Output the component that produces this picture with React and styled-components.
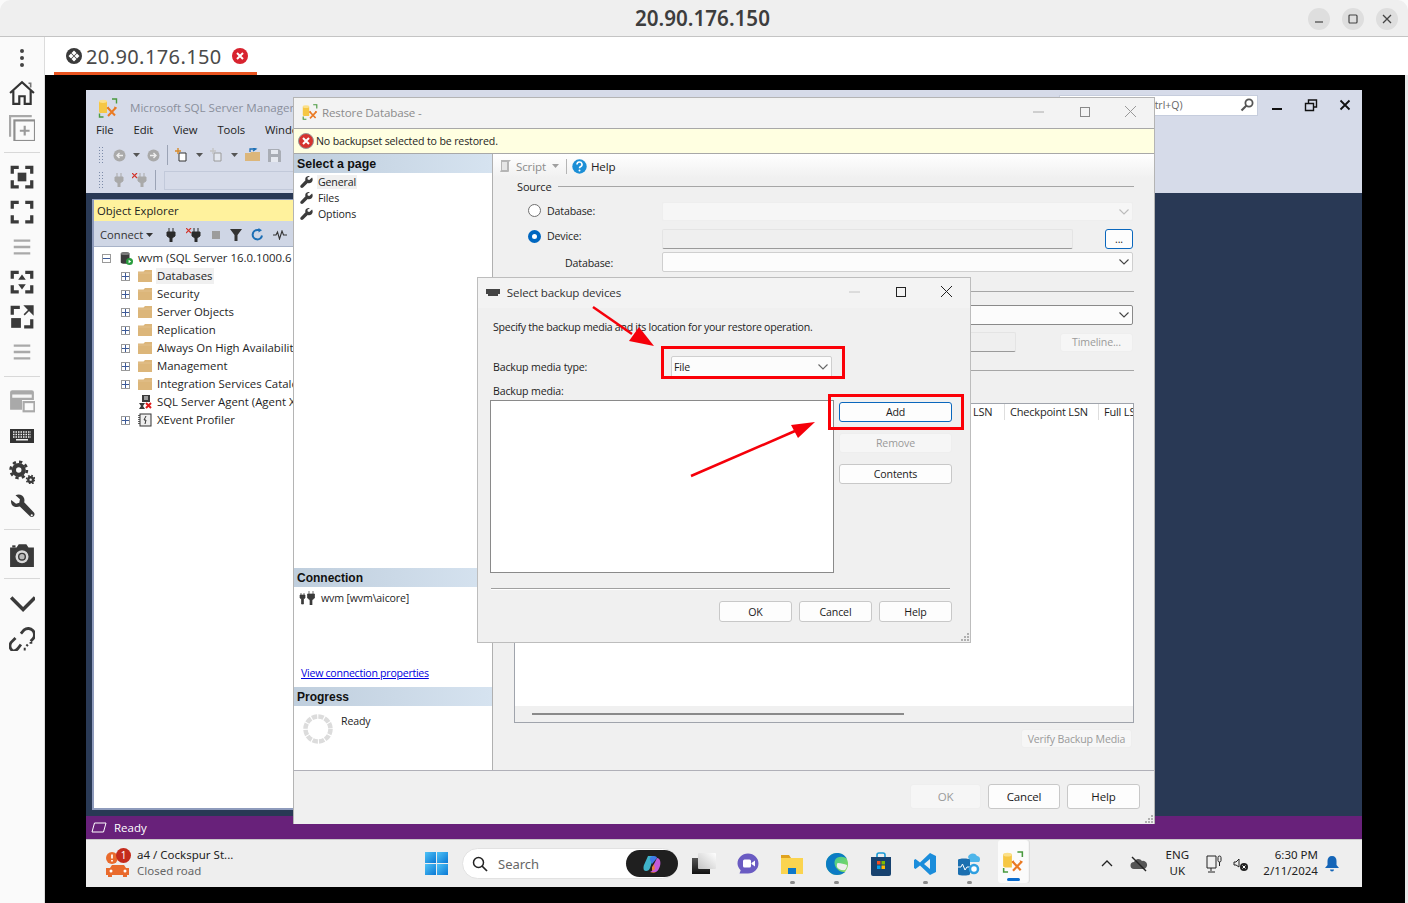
import React from 'react';
import styled, { createGlobalStyle } from 'styled-components';

const GlobalStyle = createGlobalStyle`
	html, body { margin: 0; padding: 0; background: #000; }
	body { font-family: 'Open Sans', 'Liberation Sans', sans-serif; overflow: hidden; }
	* { box-sizing: border-box; }
`;

const REMOTE = `'Open Sans', 'Liberation Sans', sans-serif`;

/* ---------- icons ---------- */

const Svg = ({ size = 24, w, h, box = '0 0 24 24', children }) => (
	<svg width={w || size} height={h || size} viewBox={box} style={{ display: 'block', flex: 'none' }}>
		{children}
	</svg>
);

const Brackets = () => (
	<path d="M3 9V3h6M15 3h6v6M21 15v6h-6M9 21H3v-6" fill="none" stroke="#3a3a3a" strokeWidth="3" />
);

const RailIcons = {
	dots: (
		<Svg>
			<circle cx="12" cy="5" r="2" fill="#444" />
			<circle cx="12" cy="12" r="2" fill="#444" />
			<circle cx="12" cy="19" r="2" fill="#444" />
		</Svg>
	),
	home: (
		<Svg size={26}>
			<path d="M1 12L12 2l11 10M4 10v12h5.500v-7h5v7H20V10" fill="none" stroke="#333" strokeWidth="2" />
			<path d="M18 3h2v4" fill="none" stroke="#777" strokeWidth="1.500" />
		</Svg>
	),
	add: (
		<Svg size={26}>
			<path d="M1 20V1h20" fill="none" stroke="#a8a8a8" strokeWidth="2" />
			<rect x="5" y="5" width="19" height="19" fill="none" stroke="#8e8e8e" strokeWidth="2" />
			<path d="M14.500 10v9M10 14.500h9" stroke="#9a9a9a" strokeWidth="2" />
		</Svg>
	),
	fit: (
		<Svg size={26}>
			<Brackets />
			<rect x="8" y="8" width="8" height="8" fill="#3a3a3a" />
		</Svg>
	),
	corners: (
		<Svg size={26}>
			<Brackets />
		</Svg>
	),
	lines: (
		<Svg size={22}>
			<path d="M3 5h18M3 12h18M3 19h18" stroke="#a9a9a9" strokeWidth="2.500" />
		</Svg>
	),
	updown: (
		<Svg size={26}>
			<Brackets />
			<path d="M12 5l3.500 5h-7zM12 19l-3.500-5h7z" fill="#3a3a3a" />
		</Svg>
	),
	expand: (
		<Svg size={26}>
			<path d="M3 10V3h7M21 14v7h-7" fill="none" stroke="#3a3a3a" strokeWidth="3" />
			<rect x="2" y="13" width="9" height="9" fill="#3a3a3a" />
			<path d="M15 2h7v7zM14 10l4-4" fill="#3a3a3a" stroke="#3a3a3a" strokeWidth="1.500" />
		</Svg>
	),
	window: (
		<Svg size={26} box="0 1 24 24">
			<path d="M1 21V5q0-2 2-2h18q2 0 2 2v7H12v9z" fill="#a9a9a9" />
			<rect x="3" y="7" width="18" height="3" fill="#f5f5f5" />
			<rect x="13.500" y="14" width="10" height="8.500" fill="#fafafa" stroke="#a9a9a9" strokeWidth="2" />
		</Svg>
	),
	keyboard: (
		<Svg w={24} h={14} box="0 0 24 14">
			<rect width="24" height="14" fill="#333" />
			<path d="M3 3h18M3 5.500h18M3 8h18" stroke="#eee" strokeWidth="1.300" strokeDasharray="1.500 1" />
			<rect x="6" y="10" width="12" height="1.500" fill="#eee" />
		</Svg>
	),
	gears: (
		<Svg size={26} box="0 -1 24 24">
			<circle cx="9" cy="10" r="4.500" fill="none" stroke="#3a3a3a" strokeWidth="4" />
			<circle cx="9" cy="10" r="7.500" fill="none" stroke="#3a3a3a" strokeWidth="2.500" strokeDasharray="3 2.900" />
			<circle cx="20" cy="19" r="2.200" fill="none" stroke="#3a3a3a" strokeWidth="2.200" />
			<circle cx="20" cy="19" r="3.800" fill="none" stroke="#3a3a3a" strokeWidth="1.500" strokeDasharray="1.500 1.500" />
		</Svg>
	),
	wrench: (
		<Svg size={26}>
			<path
				d="M2 6.500L6.500 10l3-1 .6-3.200L6 2c3-1.500 7-.5 8 3 .4 1.300.3 2.500 0 3.500l9 9.500c.8 1 .8 2.500-.2 3.500s-2.500 1-3.500 0L10 12.500c-3 1-6 .3-7.500-2-.6-1-.8-2.500-.5-4z"
				fill="#3a3a3a"
			/>
			<circle cx="21" cy="20.500" r="1" fill="#fafafa" />
		</Svg>
	),
	camera: (
		<Svg size={26}>
			<path d="M1 6h6l2-3h7l2 3h5v18H1z" fill="#3a3a3a" />
			<rect x="3" y="4" width="3" height="2" fill="#3a3a3a" />
			<circle cx="12" cy="14.500" r="6" fill="#d9d9d9" />
			<circle cx="12" cy="14.500" r="3.700" fill="#3a3a3a" />
			<circle cx="12" cy="14.500" r="2.400" fill="#bcbcbc" />
		</Svg>
	),
	chevron: (
		<Svg size={26}>
			<path d="M2 7l11 11L24 7" fill="none" stroke="#3a3a3a" strokeWidth="3.200" />
		</Svg>
	),
	link: (
		<Svg size={26} box="0 -2 24 24">
			<path d="M11 6l3-3.500c2.500-2 6-1.500 8 .5s2 6 0 8l-2 2M11 16l-3 4c-2 2-4 2.500-5.500 1S0 17 2 14l4-4" fill="none" stroke="#3a3a3a" strokeWidth="2.600" />
			<path d="M16 16l1.500 1.500M19 14.500h2.500M14.500 19v2.500" stroke="#3a3a3a" strokeWidth="1.800" />
		</Svg>
	),
};

const SsmsLogo = ({ size = 20 }) => (
	<Svg size={size} box="0 0 20 20">
		<path d="M1 3.500C1 2 9 2 9 3.500V15H3c-1 0-2-.5-2-1.500z" fill="#f6c744" />
		<ellipse cx="5" cy="3.300" rx="4" ry="1.600" fill="#fbe08a" />
		<path d="M1.500 15.500v3.500h4M14 1h4.500v4.500" fill="none" stroke="#4a9a3f" strokeWidth="1.400" />
		<path d="M9.500 9.500l7.500 8M18 9.500l-8 8.500" stroke="#ea7a23" strokeWidth="2" />
		<path d="M16 8.500l3 1-2 2zM8.500 10l2-1.500 1 2.500z" fill="#ea7a23" />
	</Svg>
);

const Wrench12 = () => (
	<Svg size={13} box="0 0 14 14">
		<path d="M13 1.500L10 4.200 8.300 3.700 8 2l2.600-1.700C8.500-.5 6 .7 5.700 3c-.1.700 0 1.200.2 1.700L.8 10c-.7.800-.7 1.800 0 2.500s1.800.7 2.500 0l5-5c2.500.8 4.800-.5 5.300-3 .1-1 0-2-.6-3z" fill="#3b3b3b" />
	</Svg>
);

const Folder = () => (
	<Svg size={14} box="0 0 14 14">
		<path d="M0 2.500h5.500L7 1h7v12H0z" fill="#dcb67a" />
		<path d="M0 4h14" stroke="#e8cb9a" strokeWidth="0.600" />
	</Svg>
);

const Expander = ({ minus }) => (
	<ExpanderBox>
		<svg width="7" height="7" viewBox="0 0 7 7">
			<path d={minus ? 'M0 3.500h7' : 'M0 3.500h7M3.500 0v7'} stroke="#3d5a98" strokeWidth="1" />
		</svg>
	</ExpanderBox>
);

const Plug = ({ color = '#2b2b2b', crossed }) => (
	<Svg w={crossed ? 16 : 12} h={14} box={crossed ? '-4 0 16 14' : '0 0 12 14'}>
		<path d="M4 0v4M8 0v4M2 4h8v4L7 10v4H5v-4L2 8z" fill={color} stroke={color} strokeWidth="1" />
		{crossed && <path d="M-4 0l5 5M1 0l-5 5" stroke="#d2342a" strokeWidth="1.200" />}
	</Svg>
);

const SmallCaret = () => (
	<svg width="7" height="4" viewBox="0 0 7 4">
		<path d="M0 0h7L3.500 4z" fill="currentColor" />
	</svg>
);

const ComboChevron = ({ color = '#444' }) => (
	<svg width="10" height="6" viewBox="0 0 10 6">
		<path d="M.5.500L5 5 9.500.500" fill="none" stroke={color} strokeWidth="1.100" />
	</svg>
);

const Grip = () => (
	<svg width="9" height="9" viewBox="0 0 9 9">
		<path d="M7 1h2v2H7zM4 4h2v2H4zM7 4h2v2H7zM1 7h2v2H1zM4 7h2v2H4zM7 7h2v2H7z" fill="#b0b0b0" />
	</svg>
);

const Spinner = () => (
	<Svg size={30} box="0 0 30 30">
		<circle cx="15" cy="15" r="12.500" fill="none" stroke="#dcdcdc" strokeWidth="4.500" strokeDasharray="5.400 1.140" />
	</Svg>
);

/* ---------- viewer chrome ---------- */

const Shell = styled.div`
	width: 1408px;
	height: 903px;
	display: flex;
	flex-direction: column;
	background: #fafafa;
	overflow: hidden;
`;

const TitleBar = styled.header`
	height: 37px;
	flex: none;
	display: flex;
	align-items: center;
	justify-content: center;
	position: relative;
	background: #efefef;
	border-bottom: 1px solid #c4c4c4;
	border-radius: 11px 11px 0 0;
`;

const TitleText = styled.div`
	font-family: 'Noto Sans', sans-serif;
	font-size: 20.6px;
	font-weight: 600;
	color: #3d3d3d;
	margin-left: -3px;
`;

const TitleControls = styled.div`
	position: absolute;
	right: 10px;
	top: 8px;
	display: flex;
	gap: 12px;
`;

const TitleControl = styled.div`
	width: 22px;
	height: 22px;
	border-radius: 50%;
	background: #dedede;
	display: flex;
	align-items: center;
	justify-content: center;
`;

const Main = styled.div`
	flex: 1;
	display: flex;
	min-height: 0;
`;

const Rail = styled.nav`
	width: 45px;
	flex: none;
	display: flex;
	flex-direction: column;
	padding-top: 3px;
	background: #fafafa;
	border-right: 1px solid #dcdcdc;
`;

const RailButton = styled.div`
	height: 35px;
	display: flex;
	align-items: center;
	justify-content: center;
	padding-right: 1px;
`;

const RailRule = styled.div`
	height: ${(p) => p.$h}px;
	display: flex;
	align-items: center;
	justify-content: center;
	&::after {
		content: '';
		width: 36px;
		height: 1px;
		background: #d8d8d8;
	}
`;

const Viewer = styled.div`
	flex: 1;
	display: flex;
	flex-direction: column;
	min-width: 0;
`;

const TabStrip = styled.div`
	height: 38px;
	flex: none;
	padding-left: 9px;
	background: #fff;
	display: flex;
`;

const Tab = styled.div`
	width: 203px;
	display: flex;
	align-items: center;
	gap: 4px;
	padding: 3px 0 0 12px;
	border-bottom: 3px solid #e95420;
	font-family: 'Noto Sans', sans-serif;
	font-size: 20px;
	color: #4a4a4a;
	letter-spacing: 0.4px;
`;

const RemoteArea = styled.div`
	flex: 1;
	background: #000;
	padding: 15px 43px 16px 41px;
	position: relative;
	display: flex;
	&::after {
		content: '';
		position: absolute;
		right: 0;
		top: 0;
		bottom: 0;
		width: 3px;
		background: #e8e8e8;
	}
`;

/* ---------- remote desktop ---------- */

const Desktop = styled.div`
	position: relative;
	width: 1276px;
	height: 797px;
	display: flex;
	flex-direction: column;
	font-family: ${REMOTE};
	font-size: 10.6px;
	color: #1e1e1e;
	overflow: hidden;
`;

const SsmsChrome = styled.div`
	height: 103px;
	flex: none;
	background: #d6dbe9;
	display: flex;
	flex-direction: column;
`;

const SsmsTitle = styled.div`
	height: 29px;
	flex: none;
	display: flex;
	align-items: center;
	padding: 6px 0 0 12px;
	gap: 12px;
	color: #8a8f9c;
	font-size: 11.6px;
`;

const SsmsName = styled.div`
	width: 163px;
	flex: none;
	white-space: nowrap;
	overflow: hidden;
`;

const QuickLaunch = styled.div`
	margin-left: auto;
	width: 199px;
	height: 21px;
	margin-top: -5px;
	background: #fff;
	border: 1px solid #c6cddd;
	display: flex;
	align-items: center;
	justify-content: space-between;
	padding: 0 3px 0 16px;
	font-size: 10.5px;
	color: #666;
`;

const WindowButtons = styled.div`
	display: flex;
	width: 104px;
	padding-left: 12px;
	margin-left: -12px;
	gap: 20px;
	margin-top: -6px;
`;

const MenuBar = styled.div`
	width: 207px;
	height: 24px;
	flex: none;
	display: flex;
	align-items: center;
	padding: 0 0 3px 10px;
	gap: 20px;
	font-size: 11.3px;
	letter-spacing: -0.1px;
	color: #222;
	overflow: hidden;
`;

const ToolRow = styled.div`
	height: 24px;
	flex: none;
	margin: 0 0 1px 10px;
	display: flex;
	align-items: center;
	gap: 7px;
	padding-left: 13px;
	color: #555;
`;

const ToolGrip = styled.div`
	width: 5px;
	height: 18px;
	margin: 0 3px 0 -11px;
	background-image: radial-gradient(#7c8ba8 0.7px, transparent 0.8px);
	background-size: 3px 3px;
`;

const ToolBreak = styled.div`
	width: 1px;
	height: 20px;
	background: #9ba3b5;
`;

const ToolInput = styled.div`
	width: 300px;
	height: 19px;
	margin-left: 1px;
	border: 1px solid #c2c9da;
`;

const SsmsBody = styled.div`
	flex: 1;
	min-height: 0;
	background: #293955;
	padding: 6px 0 6px 6px;
`;

const ObjectExplorer = styled.section`
	width: 201px;
	height: 100%;
	display: flex;
	flex-direction: column;
	background: #fff;
	border: 1px solid #8e9bbc;
	border-width: 1px 0 2px 2px;
	overflow: hidden;
`;

const ExplorerHead = styled.div`
	height: 21px;
	flex: none;
	background: #fff29d;
	display: flex;
	align-items: center;
	padding-left: 3px;
	font-size: 11.3px;
	color: #222;
`;

const ExplorerTools = styled.div`
	height: 26px;
	flex: none;
	background: #cfd6e5;
	display: flex;
	align-items: center;
	padding: 2px 0 0 6px;
	gap: 9px;
	color: #333;
	font-size: 11.2px;
	border-bottom: 1px solid #a8b3c8;
`;

const ConnectLabel = styled.span`
	display: flex;
	align-items: center;
	gap: 3px;
	margin-right: 3px;
`;

const Tree = styled.div`
	flex: 1;
	padding-top: 2px;
	display: flex;
	flex-direction: column;
`;

const TreeRow = styled.div`
	height: 18px;
	flex: none;
	display: flex;
	align-items: center;
	padding-left: ${(p) => p.$indent}px;
	gap: 4px;
	white-space: nowrap;
	font-size: 11.4px;
`;

const TreeLabel = styled.span`
	padding: 0 1px;
	background: ${(p) => (p.$selected ? '#f0f0f0' : 'transparent')};
	line-height: 16px;
`;

const ExpanderBox = styled.div`
	width: 9px;
	height: 9px;
	flex: none;
	margin-right: 4px;
	border: 1px solid #9a9a9a;
	background: #fff;
	display: flex;
	align-items: center;
	justify-content: center;
	& svg { display: block; }
`;

const ExpanderSlot = styled.div`
	width: 13px;
	flex: none;
`;

const StatusBar = styled.footer`
	height: 24px;
	flex: none;
	background: #68217a;
	color: #fff;
	display: flex;
	align-items: center;
	padding-left: 5px;
	gap: 7px;
	font-size: 11.5px;
	border-bottom: 1px solid #c9c9c9;
`;

/* ---------- taskbar ---------- */

const Taskbar = styled.div`
	height: 47px;
	flex: none;
	background: #eeeeee;
	display: flex;
	align-items: center;
	font-family: 'Noto Sans', sans-serif;
`;

const Weather = styled.div`
	width: 339px;
	flex: none;
	padding-left: 19px;
	display: flex;
	align-items: center;
	gap: 6px;
	position: relative;
`;

const Badge = styled.div`
	position: absolute;
	left: 30px;
	top: -1px;
	width: 15px;
	height: 15px;
	border-radius: 50%;
	background: #c42b1c;
	color: #fff;
	font-size: 10px;
	display: flex;
	align-items: center;
	justify-content: center;
`;

const TwoLine = styled.div`
	display: flex;
	flex-direction: column;
	font-size: 11.5px;
	line-height: 16px;
	margin-top: -2px;
	margin-left: ${(p) => p.$left || 0}px;
	color: #222;
	text-align: ${(p) => p.$align || 'left'};
`;

const MutedLine = styled.span`
	color: #666;
`;

const WinGrid = styled.div`
	width: 23px;
	height: 23px;
	flex: none;
	display: grid;
	grid-template-columns: 1fr 1fr;
	gap: 1px;
	margin-right: 14px;
	& > div {
		background: linear-gradient(135deg, #4fc3f7, #0a78d4);
	}
`;

const SearchBox = styled.div`
	width: 216px;
	height: 31px;
	flex: none;
	border-radius: 16px;
	background: #fff;
	border: 1px solid #e2e2e2;
	display: flex;
	align-items: center;
	padding-left: 9px;
	gap: 10px;
	font-size: 13px;
	color: #666;
`;

const CopilotPill = styled.div`
	margin-left: auto;
	width: 52px;
	height: 27px;
	margin-right: -1px;
	border-radius: 14px;
	background: #1f1f1f;
	display: flex;
	align-items: center;
	justify-content: center;
`;

const TaskIcons = styled.div`
	display: flex;
	margin-left: 4px;
`;

const TaskIcon = styled.div`
	width: 44.2px;
	height: 47px;
	display: flex;
	align-items: center;
	justify-content: center;
	position: relative;
	${(p) => p.$running && `
		&::after {
			content: '';
			position: absolute;
			bottom: 3px;
			width: 5px;
			height: 3px;
			border-radius: 2px;
			background: #8a8a8a;
		}
	`}
`;

const ActiveIcon = styled(TaskIcon)`
	width: 30px;
	height: 43px;
	margin: 0 0 0 7px;
	background: #fbfbfb;
	border-radius: 3px;
	box-shadow: 1px 0 0 #f4f4f4, 2px 0 0 #dddddd;
	&::after {
		content: '';
		position: absolute;
		bottom: 2px;
		left: 9px;
		width: 13px;
		height: 3px;
		border-radius: 2px;
		background: #0a6cce;
	}
`;

const Tray = styled.div`
	margin-left: 61px;
	display: flex;
	align-items: center;
`;

const TrayItem = styled.div`
	width: ${(p) => p.$w}px;
	display: flex;
	align-items: center;
	justify-content: center;
`;

/* ---------- restore window ---------- */

const RestoreWindow = styled.div`
	position: absolute;
	left: 207px;
	top: 7px;
	width: 862px;
	height: 727px;
	display: flex;
	flex-direction: column;
	background: #f0f0f0;
	border: 1px solid #b4b4b4;
	border-width: 1px 1px 0 1px;
	letter-spacing: -0.15px;
`;

const WindowTitle = styled.div`
	height: 30px;
	flex: none;
	display: flex;
	align-items: center;
	padding: 0 0 2px 8px;
	gap: 4px;
	font-size: 11.6px;
	color: ${(p) => p.$color || '#8c8c8c'};
	background: #f3f3f3;
`;

const CaptionButtons = styled.div`
	margin-left: auto;
	display: flex;
	align-items: center;
	gap: ${(p) => p.$gap}px;
	padding-right: ${(p) => p.$pad}px;
`;

const Notice = styled.div`
	height: 26px;
	flex: none;
	display: flex;
	align-items: center;
	gap: 2px;
	padding-left: 4px;
	background: #ffffe1;
	border: solid #a8a8a8;
	border-width: 1px 0;
	font-size: 10.6px;
`;

const RestoreBody = styled.div`
	flex: 1;
	min-height: 0;
	display: flex;
	border-bottom: 1px solid #b0b0b8;
`;

const SidePane = styled.aside`
	width: 199px;
	flex: none;
	display: flex;
	flex-direction: column;
	background: #fff;
	border-right: 1px solid #b0b0b0;
`;

const SideHead = styled.div`
	height: 19px;
	flex: none;
	display: flex;
	align-items: center;
	padding: 1px 0 0 3px;
	font-family: 'Liberation Sans', sans-serif;
	font-weight: 700;
	font-size: ${(p) => p.$size || 12}px;
	letter-spacing: 0;
	color: #111;
	background: linear-gradient(90deg, #bfcedd, #d6e3f0);
`;

const PageItem = styled.div`
	height: 16px;
	flex: none;
	display: flex;
	align-items: center;
	padding-left: 6px;
	gap: 4px;
`;

const PageLabel = styled.span`
	padding: 0 1px;
	background: ${(p) => (p.$selected ? '#f0f0f0' : 'transparent')};
`;

const SideList = styled.div`
	flex: 1;
	padding-top: 1px;
	display: flex;
	flex-direction: column;
`;

const ConnectionRow = styled.div`
	height: 22px;
	flex: none;
	display: flex;
	align-items: center;
	padding-left: 5px;
	gap: 6px;
`;

const ConnectionLink = styled.a`
	margin: 55px 0 5px 7px;
	height: 18px;
	flex: none;
	line-height: 18px;
	display: block;
	color: #0000e0;
	letter-spacing: -0.27px;
	text-decoration: underline;
`;

const ProgressRow = styled.div`
	height: 64px;
	flex: none;
	display: flex;
	padding: 8px 0 0 9px;
	gap: 8px;
	align-items: flex-start;
`;

const FormPane = styled.div`
	flex: 1;
	min-width: 0;
	display: flex;
	flex-direction: column;
`;

const FormTools = styled.div`
	height: 24px;
	flex: none;
	display: flex;
	align-items: center;
	padding-left: 5px;
	gap: 4px;
	background: linear-gradient(#ffffff, #f0f0f0);
	font-size: 11.6px;
	color: #8c8c8c;
`;

const ToolDivider = styled.div`
	width: 1px;
	height: 15px;
	margin: 0 1px 0 3px;
	background: #b5b5b5;
`;

const ScriptCaret = styled.span`
	margin-left: 2px;
	line-height: 0;
	color: #a0a0a0;
`;

const HelpText = styled.span`
	color: #222;
`;

const GroupHead = styled.div`
	height: 18px;
	flex: none;
	margin: ${(p) => p.$top}px 20px 0 24px;
	display: flex;
	align-items: center;
	gap: 7px;
	font-size: 11px;
	&::after {
		content: '';
		flex: 1;
		height: 1px;
		background: #a6a6a6;
	}
`;

const FormRow = styled.div`
	height: ${(p) => p.$h}px;
	flex: none;
	margin: ${(p) => p.$top}px 21px 0 ${(p) => p.$left || 35}px;
	display: grid;
	grid-template-columns: ${(p) => p.$cols || '134px 1fr'};
	align-items: center;
`;

const RadioLabel = styled.label`
	display: flex;
	align-items: center;
	gap: 6px;
	margin-bottom: ${(p) => p.$lift}px;
`;

const FieldLabel = styled.span`
	margin-top: 2px;
`;

const Radio = styled.span`
	width: 13px;
	height: 13px;
	flex: none;
	border-radius: 50%;
	background: #fff;
	border: ${(p) => (p.$on ? '4px solid #0067c0' : '1px solid #707070')};
`;

const Combo = styled.div`
	height: 100%;
	display: flex;
	align-items: center;
	justify-content: space-between;
	padding: 0 3px 0 2px;
	background: ${(p) => (p.$disabled ? '#f6f6f6' : '#fcfcfc')};
	border: 1px solid ${(p) => (p.$strong ? '#8a8a8a' : p.$disabled ? '#eeeeee' : '#cfcfcf')};
	border-radius: 2px;
`;

const Field = styled.div`
	width: ${(p) => p.$w}px;
	height: 100%;
	border: 1px solid #e4e4e4;
	border-bottom-color: #9a9a9a;
	border-radius: 2px;
	background: #efefef;
`;

const Btn = styled.div`
	width: ${(p) => p.$w}px;
	height: ${(p) => p.$h}px;
	flex: none;
	display: flex;
	align-items: center;
	justify-content: center;
	border-radius: 3px;
	font-size: ${(p) => p.$size || 10.6}px;
	color: ${(p) => (p.$disabled ? '#9a9a9a' : '#1a1a1a')};
	background: ${(p) => (p.$disabled ? '#f6f6f6' : '#fdfdfd')};
	border: 1px solid ${(p) => (p.$primary ? '#0a67bd' : p.$disabled ? '#eeeeee' : '#c8c8c8')};
`;

const DeviceRow = styled.div`
	height: 100%;
	display: flex;
	justify-content: space-between;
	align-items: center;
`;

const BackupTable = styled.div`
	height: 320px;
	flex: none;
	margin: 24px 20px 0 21px;
	display: flex;
	flex-direction: column;
	background: #fff;
	border: 1px solid #a0a4ac;
	overflow: hidden;
`;

const TableHead = styled.div`
	height: 18px;
	flex: none;
	display: flex;
	white-space: nowrap;
	font-size: 11px;
	letter-spacing: -0.2px;
`;

const HeadCell = styled.div`
	flex: 0 0 ${(p) => p.$w}px;
	padding-left: ${(p) => p.$pad ?? 5}px;
	border-right: ${(p) => (p.$w < 200 ? '1px solid #dedede' : 'none')};
	height: 16px;
	line-height: 16px;
`;

const TableBody = styled.div`
	flex: 1;
`;

const TableScroll = styled.div`
	height: 16px;
	flex: none;
	background: #f0f0f0;
	padding: 7px 0 0 17px;
	&::before {
		content: '';
		display: block;
		width: 372px;
		height: 2px;
		background: #8a8a8a;
	}
`;

const RightAlign = styled.div`
	display: flex;
	justify-content: flex-end;
	margin: ${(p) => p.$top}px ${(p) => p.$right}px 0 0;
`;

const RestoreFooter = styled.div`
	height: 53px;
	flex: none;
	position: relative;
	padding: 13px 14px 0 0;
	display: flex;
	justify-content: flex-end;
	gap: 7px;
`;

const GripSlot = styled.div`
	position: absolute;
	right: 1px;
	bottom: 1px;
	line-height: 0;
`;

/* ---------- select backup devices dialog ---------- */

const DeviceDialog = styled.div`
	position: absolute;
	left: 391px;
	top: 187px;
	width: 494px;
	height: 366px;
	display: flex;
	flex-direction: column;
	background: #f0f0f0;
	border: 1px solid #bdbdbd;
	letter-spacing: -0.15px;
`;

const DialogBody = styled.div`
	flex: 1;
	display: flex;
	flex-direction: column;
	padding: 0 18px 0 12px;
	position: relative;
`;

const DialogLine = styled.div`
	padding-left: 3px;
	height: 16px;
	line-height: 16px;
	margin-top: ${(p) => p.$top}px;
`;

const DialogIntro = styled(DialogLine)`
	letter-spacing: -0.28px;
`;

const MediaType = styled.div`
	height: 22px;
	margin-top: 21px;
	padding-left: 3px;
	display: grid;
	grid-template-columns: 178px 161px;
	align-items: center;
`;

const MediaRow = styled.div`
	display: flex;
	margin-top: 1px;
	gap: 5px;
`;

const MediaList = styled.div`
	width: 344px;
	height: 173px;
	background: #fff;
	border: 1px solid #8a8a8a;
`;

const MediaButtons = styled.div`
	display: flex;
	flex-direction: column;
	gap: 11px;
	padding-top: 2px;
`;

const DialogRule = styled.div`
	height: 1px;
	margin: 15px 2px 0 1px;
	background: #a0a0a0;
	box-shadow: 0 1px 0 #fff;
`;

const DialogFooter = styled.div`
	display: flex;
	justify-content: flex-end;
	gap: 7px;
	margin-top: 12px;
`;

const RedBox = styled.div`
	position: absolute;
	left: ${(p) => p.$x}px;
	top: ${(p) => p.$y}px;
	width: ${(p) => p.$w}px;
	height: ${(p) => p.$h}px;
	border: 3px solid #fb0007;
`;

const ArrowLayer = styled.svg`
	position: absolute;
	left: 0;
	top: 0;
	pointer-events: none;
`;

const TreeItem = ({ label, selected, icon, expander = true }) => (
	<TreeRow $indent={27}>
		{expander ? <Expander /> : <ExpanderSlot />}
		{icon || <Folder />}
		<TreeLabel $selected={selected}>{label}</TreeLabel>
	</TreeRow>
);

// rule heights are read off the screenshot
const railItems = ['dots', 'home', 'add', 14, 'fit', 'corners', 'lines', 'updown', 'expand', 'lines', 14, 'window', 'keyboard', 'gears', 'wrench', 13, 'camera', 14, 'chevron', 'link'];

export default function App() {
	return (
		<React.Fragment>
			<GlobalStyle />
			<Shell>
				<TitleBar>
					<TitleText>20.90.176.150</TitleText>
					<TitleControls>
						<TitleControl>
							<svg width="10" height="10" viewBox="0 0 10 10"><path d="M1 8h8" stroke="#444" strokeWidth="1.200" /></svg>
						</TitleControl>
						<TitleControl>
							<svg width="10" height="10" viewBox="0 0 10 10"><rect x="1" y="1" width="8" height="8" rx="1" fill="none" stroke="#444" strokeWidth="1.200" /></svg>
						</TitleControl>
						<TitleControl>
							<svg width="10" height="10" viewBox="0 0 10 10"><path d="M1 1l8 8M9 1l-8 8" stroke="#444" strokeWidth="1.300" /></svg>
						</TitleControl>
					</TitleControls>
				</TitleBar>
				<Main>
					<Rail>
						{railItems.map((item, i) =>
							typeof item === 'number' ? <RailRule key={i} $h={item} /> : <RailButton key={i}>{RailIcons[item]}</RailButton>
						)}
					</Rail>
					<Viewer>
						<TabStrip>
							<Tab>
								<Svg size={16} box="0 0 16 16">
									<circle cx="8" cy="8" r="8" fill="#3a3a3a" />
									<path d="M8 2.500L10.500 5 8 7.500 5.500 5zM8 8.500l2.500 2.500L8 13.500 5.500 11zM2.500 8L5 5.500 7.500 8 5 10.500zM13.500 8L11 10.500 8.500 8 11 5.500z" fill="#fff" />
								</Svg>
								20.90.176.150
								<svg width="16" height="16" viewBox="0 0 16 16" style={{ marginLeft: 6 }}>
									<circle cx="8" cy="8" r="8" fill="#d8232f" />
									<path d="M5 5l6 6M11 5l-6 6" stroke="#fff" strokeWidth="2" />
								</svg>
							</Tab>
						</TabStrip>
						<RemoteArea>
							<Desktop>
								<SsmsChrome>
									<SsmsTitle>
										<SsmsLogo />
										<SsmsName>Microsoft SQL Server Management Studio</SsmsName>
										<QuickLaunch>
											<span>Quick Launch (Ctrl+Q)</span>
											<svg width="14" height="14" viewBox="0 0 14 14">
												<circle cx="9" cy="5" r="3.600" fill="none" stroke="#555" strokeWidth="1.800" />
												<path d="M6.500 7.500L1.500 12.500" stroke="#555" strokeWidth="2.200" />
											</svg>
										</QuickLaunch>
										<WindowButtons>
											<svg width="14" height="14" viewBox="0 0 14 14"><path d="M2 11h10" stroke="#111" strokeWidth="2" /></svg>
											<svg width="14" height="14" viewBox="0 0 14 14"><path d="M1.500 5.500h8v7h-8zM4.500 5V2h8v7h-3" fill="none" stroke="#111" strokeWidth="1.400" /></svg>
											<svg width="14" height="14" viewBox="0 0 14 14"><path d="M2.500 2.500l9 9M11.500 2.500l-9 9" stroke="#111" strokeWidth="1.800" /></svg>
										</WindowButtons>
									</SsmsTitle>
									<MenuBar>
										<span>File</span>
										<span>Edit</span>
										<span>View</span>
										<span>Tools</span>
										<span>Window</span>
									</MenuBar>
									<ToolRow>
										<ToolGrip />
										<svg width="13" height="13" viewBox="0 0 13 13"><circle cx="6.500" cy="6.500" r="6" fill="#a9a9a9" /><path d="M10 6.500H4M6.500 4L4 6.500 6.500 9" fill="none" stroke="#eee" strokeWidth="1.400" /></svg>
										<SmallCaret />
										<svg width="13" height="13" viewBox="0 0 13 13"><circle cx="6.500" cy="6.500" r="6" fill="#a9a9a9" /><path d="M3 6.500h6M6.500 4L9 6.500 6.500 9" fill="none" stroke="#eee" strokeWidth="1.400" /></svg>
										<ToolBreak />
										<svg width="14" height="14" viewBox="0 0 14 14"><path d="M4 5h7v8H4z" fill="#fff" stroke="#333" /><path d="M3 0v6M0 3h6" stroke="#d78a2a" strokeWidth="1.400" /></svg>
										<SmallCaret />
										<svg width="14" height="14" viewBox="0 0 14 14"><path d="M4 5h7v8H4z" fill="#e4e8f0" stroke="#9a9a9a" /><path d="M3 0v6M0 3h6" stroke="#c4c4c4" strokeWidth="1.400" /></svg>
										<SmallCaret />
										<svg width="16" height="14" viewBox="0 0 16 14"><path d="M0 5h5l1-1h9v9H0z" fill="#dcb67a" /><path d="M5 4V1h5M8 0l3 1-3 2" fill="none" stroke="#1c6fb5" strokeWidth="1.300" /></svg>
										<svg width="13" height="13" viewBox="0 0 13 13"><path d="M0 0h11l2 2v11H0z" fill="#a9adb5" /><rect x="3" y="1" width="7" height="4" fill="#e6e9f0" /><rect x="3" y="8" width="7" height="5" fill="#e6e9f0" /></svg>
									</ToolRow>
									<ToolRow>
										<ToolGrip />
										<Plug color="#a9a9a9" />
										<Plug color="#a9a9a9" crossed />
										<ToolBreak />
										<ToolInput />
									</ToolRow>
								</SsmsChrome>
								<SsmsBody>
									<ObjectExplorer>
										<ExplorerHead>Object Explorer</ExplorerHead>
										<ExplorerTools>
											<ConnectLabel>Connect<SmallCaret /></ConnectLabel>
											<Plug />
											<Plug crossed />
											<svg width="10" height="10" viewBox="0 0 10 10"><rect x="1" y="1" width="8" height="8" fill="#9c9c9c" /></svg>
											<svg width="12" height="12" viewBox="0 0 12 12"><path d="M0 0h12L7.500 6v6h-3V6z" fill="#333" /></svg>
											<svg width="13" height="13" viewBox="0 0 13 13"><path d="M11 7.500A4.700 4.700 0 1 1 6.500 2H9" fill="none" stroke="#1c6fb5" strokeWidth="2" /><path d="M7.500 0L11 2.200 7.500 4.500z" fill="#1c6fb5" /></svg>
											<svg width="14" height="10" viewBox="0 0 14 10"><path d="M0 5h3l1.500-3 2 7L9 1l1.500 4H14" fill="none" stroke="#333" strokeWidth="1.100" /></svg>
										</ExplorerTools>
										<Tree>
											<TreeRow $indent={8}>
												<Expander minus />
												<Svg size={14} box="0 0 16 16">
													<path d="M2 3c0-2 10-2 10 0v10c0 2-10 2-10 0z" fill="#3c3c3c" />
													<ellipse cx="7" cy="3" rx="5" ry="1.500" fill="#7b7b7b" />
													<circle cx="12" cy="12" r="4" fill="#2a9d3e" />
													<path d="M11 10l3 2-3 2z" fill="#fff" />
												</Svg>
												<TreeLabel>wvm (SQL Server 16.0.1000.6 - wvm\aicore)</TreeLabel>
											</TreeRow>
											<TreeItem label="Databases" selected />
											<TreeItem label="Security" />
											<TreeItem label="Server Objects" />
											<TreeItem label="Replication" />
											<TreeItem label="Always On High Availability" />
											<TreeItem label="Management" />
											<TreeItem label="Integration Services Catalogs" />
											<TreeItem
												label="SQL Server Agent (Agent XPs disabled)"
												expander={false}
												icon={
													<Svg size={14} box="0 0 14 14">
														<rect x="4" y="0" width="8" height="7" fill="#3b3b3b" />
														<path d="M6 2h4M6 4h4" stroke="#fff" />
														<path d="M1 8h6L5 11l2 3H1l2-3z" fill="#3b3b3b" />
														<path d="M8 8l5 5M13 8l-5 5" stroke="#e01b1b" strokeWidth="2" />
													</Svg>
												}
											/>
											<TreeItem
												label="XEvent Profiler"
												icon={
													<Svg size={14} box="0 0 14 14">
														<rect x="2" y="1" width="11" height="12" fill="#eee" stroke="#333" />
														<path d="M8 3L6 7h2l-1 4" fill="none" stroke="#333" />
														<path d="M1 2v10" stroke="#333" strokeWidth="1.500" strokeDasharray="1 1" />
													</Svg>
												}
											/>
										</Tree>
									</ObjectExplorer>
								</SsmsBody>
								<StatusBar>
									<svg width="16" height="11" viewBox="0 0 16 11"><path d="M3.500 1H15l-2.500 9H1z" fill="none" stroke="#fff" strokeWidth="1" /></svg>
									Ready
								</StatusBar>
								<Taskbar>
									<Weather>
										<Svg w={26} h={30} box="0 0 26 30">
											<circle cx="7" cy="9" r="6" fill="#e96a2c" />
											<path d="M7 5.500v4M7 11v1.500" stroke="#fff" strokeWidth="1.700" />
											<path d="M5 19l2-3h12l2 3h3v7h-2v2h-4v-2H7v2H3v-2H1v-7z" fill="#e96a2c" />
											<circle cx="6" cy="22" r="1.500" fill="#fff" />
											<circle cx="20" cy="22" r="1.500" fill="#fff" />
										</Svg>
										<Badge>1</Badge>
										<TwoLine>
											<span>a4 / Cockspur St...</span>
											<MutedLine>Closed road</MutedLine>
										</TwoLine>
									</Weather>
									<WinGrid>
										<div /><div /><div /><div />
									</WinGrid>
									<SearchBox>
										<svg width="16" height="16" viewBox="0 0 16 16"><circle cx="6.500" cy="6.500" r="5" fill="none" stroke="#222" strokeWidth="1.500" /><path d="M10 10l5 5" stroke="#222" strokeWidth="1.700" /></svg>
										Search
										<CopilotPill>
											<svg width="18" height="18" viewBox="0 0 18 18">
												<path d="M5 1h6L7 13c-.6 1.800-2 3-4 3-2.500 0-3-3-2-6z" fill="#3fb3c9" />
												<path d="M7 5c-1-2 1-4 4-4 2 0 3 1 3 2L9 9z" fill="#3d7be9" />
												<path d="M11 9l3-6c3 0 4 4 3 8-1 3-2 5-4 6h-6c3-1 3.500-4 4-8z" fill="#c45bd8" />
												<path d="M7 17h6c-1 .8-4 1-6 0zM9 12l2-3 1 5-3 2z" fill="#ef7d3c" />
											</svg>
										</CopilotPill>
									</SearchBox>
									<TaskIcons>
										<TaskIcon>
											<svg width="26" height="24" viewBox="0 0 26 24">
												<defs>
													<linearGradient id="viewBack" x1="0" y1="0" x2="0" y2="1">
														<stop offset="0" stopColor="#555" />
														<stop offset="1" stopColor="#111" />
													</linearGradient>
													<linearGradient id="viewFront" x1="1" y1="0" x2="0" y2="1">
														<stop offset="0" stopColor="#ffffff" />
														<stop offset="1" stopColor="#c4c4c4" />
													</linearGradient>
												</defs>
												<rect x="1" y="6" width="18" height="16" fill="url(#viewBack)" />
												<rect x="7" y="1" width="18" height="16" rx="1" fill="url(#viewFront)" />
											</svg>
										</TaskIcon>
										<TaskIcon>
											<svg width="24" height="24" viewBox="0 0 24 24">
												<path d="M12 1.500c6 0 10.500 4.500 10.500 10s-4.500 10-10.500 10H3.500l1.200-3.300C2.800 16.200 1.500 14 1.500 11.500c0-5.500 4.500-10 10.500-10z" fill="#6a5bc2" />
												<rect x="7" y="7.500" width="8" height="8" rx="1.500" fill="#fff" />
												<path d="M15.500 11l3.500-2.500v6L15.500 12z" fill="#fff" />
											</svg>
										</TaskIcon>
										<TaskIcon $running>
											<svg width="24" height="24" viewBox="0 0 24 24">
												<path d="M1 3h8l2 3h12v6H1z" fill="#e0a31f" />
												<rect x="1" y="6" width="22" height="16" fill="#fbd44f" />
												<rect x="8" y="16" width="8" height="6" fill="#0e78c9" />
											</svg>
										</TaskIcon>
										<TaskIcon $running>
											<svg width="24" height="24" viewBox="0 0 24 24">
												<defs>
													<linearGradient id="edgeA" x1="0" y1="0" x2="1" y2="1">
														<stop offset="0" stopColor="#2ec4a8" />
														<stop offset="1" stopColor="#8fdc4f" />
													</linearGradient>
												</defs>
												<circle cx="12" cy="12" r="11" fill="url(#edgeA)" />
												<path d="M1 12C1 5 7 1 12 1c4 0 8 2 10 6-3-3-10-3-12 1-2 5 2 11 8 12 1 .2 2 0 3-.5C18 22 15 23 12 23 6 23 1 18 1 12z" fill="#0c7bc4" />
												<path d="M13 11c3 0 6 1 9 2 0 2-1 4-2 5-3 1-7-1-8-3-.5-2 0-4 1-4z" fill="#eeeeee" />
											</svg>
										</TaskIcon>
										<TaskIcon>
											<svg width="20" height="24" viewBox="0 0 20 24">
												<path d="M6 6V3q0-2 2-2h4q2 0 2 2v3" fill="none" stroke="#1a9ad6" strokeWidth="1.600" />
												<path d="M0 5h20v17q0 2-2 2H2q-2 0-2-2z" fill="#17426f" />
												<rect x="6" y="9" width="3.500" height="3.500" fill="#f25022" />
												<rect x="10.500" y="9" width="3.500" height="3.500" fill="#7fba00" />
												<rect x="6" y="13.500" width="3.500" height="3.500" fill="#00a4ef" />
												<rect x="10.500" y="13.500" width="3.500" height="3.500" fill="#ffb900" />
											</svg>
										</TaskIcon>
										<TaskIcon $running>
											<svg width="24" height="24" viewBox="0 0 24 24">
												<path d="M17 1l6 3v16l-6 3L7 13.500 2.500 17 1 16V8l1.500-1L7 10.500zM17 7l-6 5 6 5z" fill="#1b8ddb" fillRule="evenodd" />
											</svg>
										</TaskIcon>
										<TaskIcon $running>
											<svg width="24" height="26" viewBox="0 0 24 26">
												<path d="M11 6c1-4 7-5 9-1 3 0 4 4 2 6h-9z" fill="#4fb6ea" />
												<path d="M1 9c0-2 12-2 12 0v14c0 2-12 2-12 0z" fill="#1b6fb0" />
												<path d="M1 16h3l1.500-3L8 19l2-3h3" fill="none" stroke="#fff" strokeWidth="1" />
												<circle cx="17" cy="18" r="4" fill="#fff" stroke="#2f9fe0" strokeWidth="2.500" />
											</svg>
										</TaskIcon>
										<ActiveIcon>
											<SsmsLogo size={22} />
										</ActiveIcon>
									</TaskIcons>
									<Tray>
										<TrayItem $w={36}>
											<svg width="12" height="7" viewBox="0 0 12 7"><path d="M1 6l5-5 5 5" fill="none" stroke="#222" strokeWidth="1.300" /></svg>
										</TrayItem>
										<TrayItem $w={28}>
											<svg width="18" height="16" viewBox="0 0 18 16"><path d="M5 13H4a3 3 0 0 1 0-7 4.500 4.500 0 0 1 8-1 4 4 0 0 1 2 8z" fill="#555" /><path d="M2 1l14 14" stroke="#222" strokeWidth="1.400" /></svg>
										</TrayItem>
										<TrayItem $w={48}>
											<TwoLine $align="center">
												<span>ENG</span>
												<span>UK</span>
											</TwoLine>
										</TrayItem>
										<TrayItem $w={26}>
											<svg width="16" height="18" viewBox="0 0 16 18"><path d="M1 1h9v12H1zM5 13v3M2 17h7" fill="none" stroke="#222" /><rect x="12" y="1" width="3" height="6" rx="1.500" fill="none" stroke="#222" /><path d="M13.500 7v4" stroke="#222" /></svg>
										</TrayItem>
										<TrayItem $w={28}>
											<svg width="16" height="16" viewBox="0 0 16 16"><path d="M1 6h2l3-3v8L3 9H1z" fill="none" stroke="#222" /><circle cx="11" cy="11" r="4" fill="#222" /><path d="M9.500 9.500l3 3M12.500 9.500l-3 3" stroke="#fff" /></svg>
										</TrayItem>
										<TwoLine $align="right" $left={8}>
											<span>6:30 PM</span>
											<span>2/11/2024</span>
										</TwoLine>
										<TrayItem $w={28}>
											<svg width="14" height="16" viewBox="0 0 14 16"><path d="M7 0c3 0 4.500 2 4.500 5v4L14 12H0l2.500-3V5C2.500 2 4 0 7 0z" fill="#1565b7" /><path d="M5 13.500h4a2 2 0 0 1-4 0z" fill="#1565b7" /></svg>
										</TrayItem>
									</Tray>
								</Taskbar>

								<RestoreWindow>
									<WindowTitle>
										<SsmsLogo size={16} />
										Restore Database -
										<CaptionButtons $gap={30} $pad={15}>
											<svg width="16" height="14" viewBox="0 0 16 14"><path d="M2 7h11" stroke="#aaa" /></svg>
											<svg width="16" height="14" viewBox="0 0 16 14"><rect x="3.500" y="2.500" width="9" height="9" fill="none" stroke="#888" /></svg>
											<svg width="16" height="14" viewBox="0 0 16 14"><path d="M2 1l11 11M13 1L2 12" stroke="#999" /></svg>
										</CaptionButtons>
									</WindowTitle>
									<Notice>
										<svg width="16" height="16" viewBox="0 0 16 16">
											<circle cx="8" cy="8" r="7.500" fill="#d5332f" stroke="#999" />
											<path d="M5 5l6 6M11 5l-6 6" stroke="#fff" strokeWidth="2" />
										</svg>
										No backupset selected to be restored.
									</Notice>
									<RestoreBody>
										<SidePane>
											<SideHead $size={12.4}>Select a page</SideHead>
											<SideList>
												<PageItem><Wrench12 /><PageLabel $selected>General</PageLabel></PageItem>
												<PageItem><Wrench12 /><PageLabel>Files</PageLabel></PageItem>
												<PageItem><Wrench12 /><PageLabel>Options</PageLabel></PageItem>
											</SideList>
											<SideHead>Connection</SideHead>
											<ConnectionRow>
												<Svg w={16} h={14} box="0 0 16 14">
													<path d="M2 2v2M5 2v2M1 4h5v3L4.500 8v5h-2V8L1 7zM10 0v3M14 0v3M8.500 3h7v4L13 9v5h-2V9L8.500 7z" fill="#3b3b3b" stroke="#3b3b3b" strokeWidth="0.700" />
												</Svg>
												wvm [wvm\aicore]
											</ConnectionRow>
											<ConnectionLink>View connection properties</ConnectionLink>
											<SideHead>Progress</SideHead>
											<ProgressRow>
												<Spinner />
												Ready
											</ProgressRow>
										</SidePane>
										<FormPane>
											<FormTools>
												<Svg size={14} box="0 0 14 14">
													<path d="M3 1h10L11 3v9q0 1-1 1H2l1-2z" fill="#b5b5b5" />
													<path d="M4 3h5v8H4z" fill="#e5e5e5" />
												</Svg>
												Script
												<ScriptCaret><SmallCaret /></ScriptCaret>
												<ToolDivider />
												<svg width="15" height="15" viewBox="0 0 15 15">
													<circle cx="7.500" cy="7.500" r="7.200" fill="#1c8fd6" />
													<path d="M5 5.500a2.500 2.500 0 1 1 3.500 2.300c-.7.300-1 .7-1 1.500" fill="none" stroke="#fff" strokeWidth="1.600" />
													<circle cx="7.500" cy="11.500" r="1" fill="#fff" />
												</svg>
												<HelpText>Help</HelpText>
											</FormTools>
											<GroupHead $top={-1}>Source</GroupHead>
											<FormRow $h={19} $top={7}>
												<RadioLabel $lift={2}><Radio />Database:</RadioLabel>
												<Combo $disabled><span /><ComboChevron color="#bbb" /></Combo>
											</FormRow>
											<FormRow $h={20} $top={8}>
												<RadioLabel $lift={6}><Radio $on />Device:</RadioLabel>
												<DeviceRow>
													<Field $w={411} />
													<Btn $w={28} $h={20} $primary>...</Btn>
												</DeviceRow>
											</FormRow>
											<FormRow $h={20} $top={3} $left={72} $cols="97px 1fr">
												<FieldLabel>Database:</FieldLabel>
												<Combo><span /><ComboChevron /></Combo>
											</FormRow>
											<GroupHead $top={10} />
											<FormRow $h={20} $top={5}>
												<span />
												<Combo $strong><span /><ComboChevron /></Combo>
											</FormRow>
											<FormRow $h={20} $top={7}>
												<span />
												<DeviceRow>
													<Field $w={354} />
													<Btn $w={73} $h={19} $disabled>Timeline...</Btn>
												</DeviceRow>
											</FormRow>
											<GroupHead $top={9} />
											<BackupTable>
												<TableHead>
													<HeadCell $w={453} $pad={0} />
													<HeadCell $w={37}>LSN</HeadCell>
													<HeadCell $w={94}>Checkpoint LSN</HeadCell>
													<HeadCell $w={80}>Full LSN</HeadCell>
												</TableHead>
												<TableBody />
												<TableScroll />
											</BackupTable>
											<RightAlign $top={6} $right={22}>
												<Btn $w={111} $h={19} $disabled>Verify Backup Media</Btn>
											</RightAlign>
										</FormPane>
									</RestoreBody>
									<RestoreFooter>
										<Btn $w={71} $h={25} $disabled $size={11.5}>OK</Btn>
										<Btn $w={72} $h={25} $size={11.5}>Cancel</Btn>
										<Btn $w={73} $h={25} $size={11.5}>Help</Btn>
										<GripSlot><Grip /></GripSlot>
									</RestoreFooter>
								</RestoreWindow>

								<DeviceDialog>
									<WindowTitle $color="#333">
										<Svg w={14} h={8} box="0 0 14 8">
											<path d="M0 1h14v5h-2v2H2V6H0z" fill="#444" />
										</Svg>
										<span>&nbsp;Select backup devices</span>
										<CaptionButtons $gap={30} $pad={15}>
											<svg width="16" height="14" viewBox="0 0 16 14"><path d="M2 7h11" stroke="#c4c4c4" /></svg>
											<svg width="16" height="14" viewBox="0 0 16 14"><rect x="3.500" y="2.500" width="9" height="9" fill="none" stroke="#222" /></svg>
											<svg width="16" height="14" viewBox="0 0 16 14"><path d="M2 1l11 11M13 1L2 12" stroke="#222" /></svg>
										</CaptionButtons>
									</WindowTitle>
									<DialogBody>
										<DialogIntro $top={11}>Specify the backup media and its location for your restore operation.</DialogIntro>
										<MediaType>
											<span>Backup media type:</span>
											<Combo>
												<span>File</span>
												<ComboChevron color="#666" />
											</Combo>
										</MediaType>
										<DialogLine $top={5}>Backup media:</DialogLine>
										<MediaRow>
											<MediaList />
											<MediaButtons>
												<Btn $w={113} $h={20} $primary>Add</Btn>
												<Btn $w={113} $h={20} $disabled>Remove</Btn>
												<Btn $w={113} $h={20}>Contents</Btn>
											</MediaButtons>
										</MediaRow>
										<DialogRule />
										<DialogFooter>
											<Btn $w={73} $h={21}>OK</Btn>
											<Btn $w={73} $h={21}>Cancel</Btn>
											<Btn $w={73} $h={21}>Help</Btn>
										</DialogFooter>
										<GripSlot><Grip /></GripSlot>
									</DialogBody>
								</DeviceDialog>

								<RedBox $x={575} $y={256} $w={184} $h={33} />
								<RedBox $x={742} $y={304} $w={136} $h={36} />
								<ArrowLayer width="1276" height="797" viewBox="0 0 1276 797">
									<path d="M507 217L546 244" stroke="#f5000a" strokeWidth="2.500" />
									<path d="M568 256L543 251 553 237z" fill="#f5000a" />
									<path d="M605 386L709 341" stroke="#f5000a" strokeWidth="2.500" />
									<path d="M729 332L705 335 712 348z" fill="#f5000a" />
								</ArrowLayer>
							</Desktop>
						</RemoteArea>
					</Viewer>
				</Main>
			</Shell>
		</React.Fragment>
	);
}
